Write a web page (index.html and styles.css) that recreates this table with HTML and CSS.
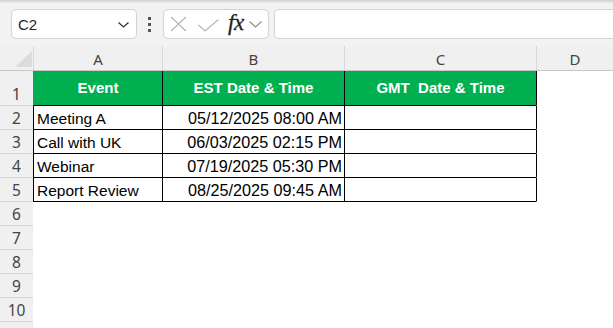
FILE: index.html
```html
<!DOCTYPE html>
<html lang="en">
<head>
  <meta charset="UTF-8">
  <meta name="viewport" content="width=device-width, initial-scale=1.0">
  <title>Time Zones</title>
  <link rel="stylesheet" href="styles.css">
</head>
<body>
  <div class="ribbon-edge"></div>

  <!-- Name box + formula bar -->
  <div class="formula-bar">
    <div class="name-box">
      <span>C2</span>
      <svg class="chev" width="11" height="6" viewBox="0 0 11 6"><path d="M0.5 0.5 L5.5 5 L10.5 0.5" fill="none" stroke="#333" stroke-width="1.3"/></svg>
    </div>
    <div class="grip"><i></i><i></i><i></i></div>
    <div class="fx-box">
      <svg width="17" height="16" viewBox="0 0 17 16"><path d="M1 1 L16 15 M16 1 L1 15" stroke="#b4b4b4" stroke-width="1.2" fill="none"/></svg>
      <svg class="tick" width="21" height="13" viewBox="0 0 21 13"><path d="M0.5 6 L7 12 L20.5 0.5" stroke="#b4b4b4" stroke-width="1.2" fill="none"/></svg>
      <span class="fx">fx</span>
      <svg width="13" height="7" viewBox="0 0 13 7"><path d="M0.5 0.5 L6.5 6 L12.5 0.5" fill="none" stroke="#8a8a8a" stroke-width="1.1"/></svg>
    </div>
    <div class="input-box"></div>
  </div>

  <!-- Sheet -->
  <div class="sheet">
    <div class="corner"><div class="tri"></div></div>
    <div class="colhead">A</div>
    <div class="colhead">B</div>
    <div class="colhead">C</div>
    <div class="colhead">D</div>

    <div class="rowhead">1</div>
    <div class="cell t th first">Event</div>
    <div class="cell t th">EST Date &amp; Time</div>
    <div class="cell t th">GMT&nbsp; Date &amp; Time</div>
    <div class="cell edge"></div>

    <div class="rowhead">2</div>
    <div class="cell t">Meeting A</div>
    <div class="cell t num">05/12/2025 08:00 AM</div>
    <div class="cell t"></div>
    <div class="cell edge"></div>

    <div class="rowhead">3</div>
    <div class="cell t">Call with UK</div>
    <div class="cell t num">06/03/2025 02:15 PM</div>
    <div class="cell t"></div>
    <div class="cell edge"></div>

    <div class="rowhead">4</div>
    <div class="cell t">Webinar</div>
    <div class="cell t num">07/19/2025 05:30 PM</div>
    <div class="cell t"></div>
    <div class="cell edge"></div>

    <div class="rowhead">5</div>
    <div class="cell t">Report Review</div>
    <div class="cell t num">08/25/2025 09:45 AM</div>
    <div class="cell t"></div>
    <div class="cell edge"></div>

    <div class="rowhead">6</div><div class="cell"></div><div class="cell"></div><div class="cell"></div><div class="cell"></div>
    <div class="rowhead">7</div><div class="cell"></div><div class="cell"></div><div class="cell"></div><div class="cell"></div>
    <div class="rowhead">8</div><div class="cell"></div><div class="cell"></div><div class="cell"></div><div class="cell"></div>
    <div class="rowhead">9</div><div class="cell"></div><div class="cell"></div><div class="cell"></div><div class="cell"></div>
    <div class="rowhead">10</div><div class="cell"></div><div class="cell"></div><div class="cell"></div><div class="cell"></div>
    <div class="rowhead"></div><div class="cell"></div><div class="cell"></div><div class="cell"></div><div class="cell"></div>
  </div>
</body>
</html>
```

FILE: styles.css
```css
* { box-sizing: border-box; }
body { margin: 0; background: #fff; font-family: "Liberation Sans", Arial, sans-serif; overflow: hidden; }

.ribbon-edge { height: 3px; background: linear-gradient(#cfcfcf, #ececec); }

.formula-bar {
  display: flex; align-items: center;
  height: 43px; padding: 6px 0 7px 11px;
  background: #f2f2f2;
}
.name-box, .fx-box, .input-box {
  height: 30px; background: #fff; border: 1px solid #d3d3d3; border-radius: 5px;
  display: flex; align-items: center;
}
.name-box { width: 126px; padding: 0 7px 0 6px; justify-content: space-between; font-size: 15px; color: #1f1f1f; }
.name-box .chev { margin-top: 2px; }
.grip { display: flex; flex-direction: column; gap: 3px; margin: 0 12px 0 11px; }
.grip i { display: block; width: 3px; height: 3px; background: #555; }
.fx-box { width: 106px; padding: 0 4px 0 6px; gap: 0; }
.fx-box .tick { margin: 2px 0 0 11px; }
.fx {
  font-family: "Liberation Serif", "Times New Roman", serif; font-style: italic;
  font-size: 23px; color: #222; margin: -3px 5px 0 9px; letter-spacing: -0.5px;
  -webkit-text-stroke: 0.3px #222;
}
.input-box { flex: 1; margin-left: 5px; border-right: none; border-radius: 5px 0 0 5px; }

.sheet {
  display: grid;
  grid-template-columns: 33px 129px 182px 192px 1fr;
  grid-template-rows: 25px 35px repeat(10, 24px);
}
.corner { background: #f0f0f0; border-bottom: 1px solid #c6c6c6; position: relative; }
.tri {
  position: absolute; left: 15px; top: 5px; width: 17px; height: 16px;
  background: #dcdcdc; clip-path: polygon(100% 0, 100% 100%, 0 100%);
}
.colhead {
  background: #f0f0f0; border-bottom: 1px solid #c6c6c6; border-left: 1px solid #d8d8d8;
  display: flex; align-items: center; justify-content: center;
  font-family: "Noto Sans", "Open Sans", sans-serif; font-size: 15px; color: #444; padding-top: 1px;
}
.rowhead {
  background: #f0f0f0; border-bottom: 1px solid #d8d8d8;
  display: flex; align-items: flex-end; justify-content: center; padding-bottom: 1px;
  font-family: "Noto Sans", "Open Sans", sans-serif; font-size: 15.5px; line-height: 20px; color: #444;
}

.cell {
  border-left: 1px solid transparent; border-bottom: 1px solid transparent;
  display: flex; align-items: flex-end; padding: 0 3px 1px 3px;
  font-size: 15.5px; line-height: 19px; color: #000; white-space: nowrap;
}
.cell.t { border-left-color: #000; border-bottom-color: #000; }
.cell.edge { border-left-color: #000; }
.cell.num { justify-content: flex-end; padding-right: 2px; font-size: 16.2px; }
.cell.th {
  background: #00b050; color: #fff; font-weight: bold; font-size: 15px;
  align-items: center; justify-content: center; padding: 0 0 1px 0;
}
.cell.th.first { border-left-color: transparent; }
```
